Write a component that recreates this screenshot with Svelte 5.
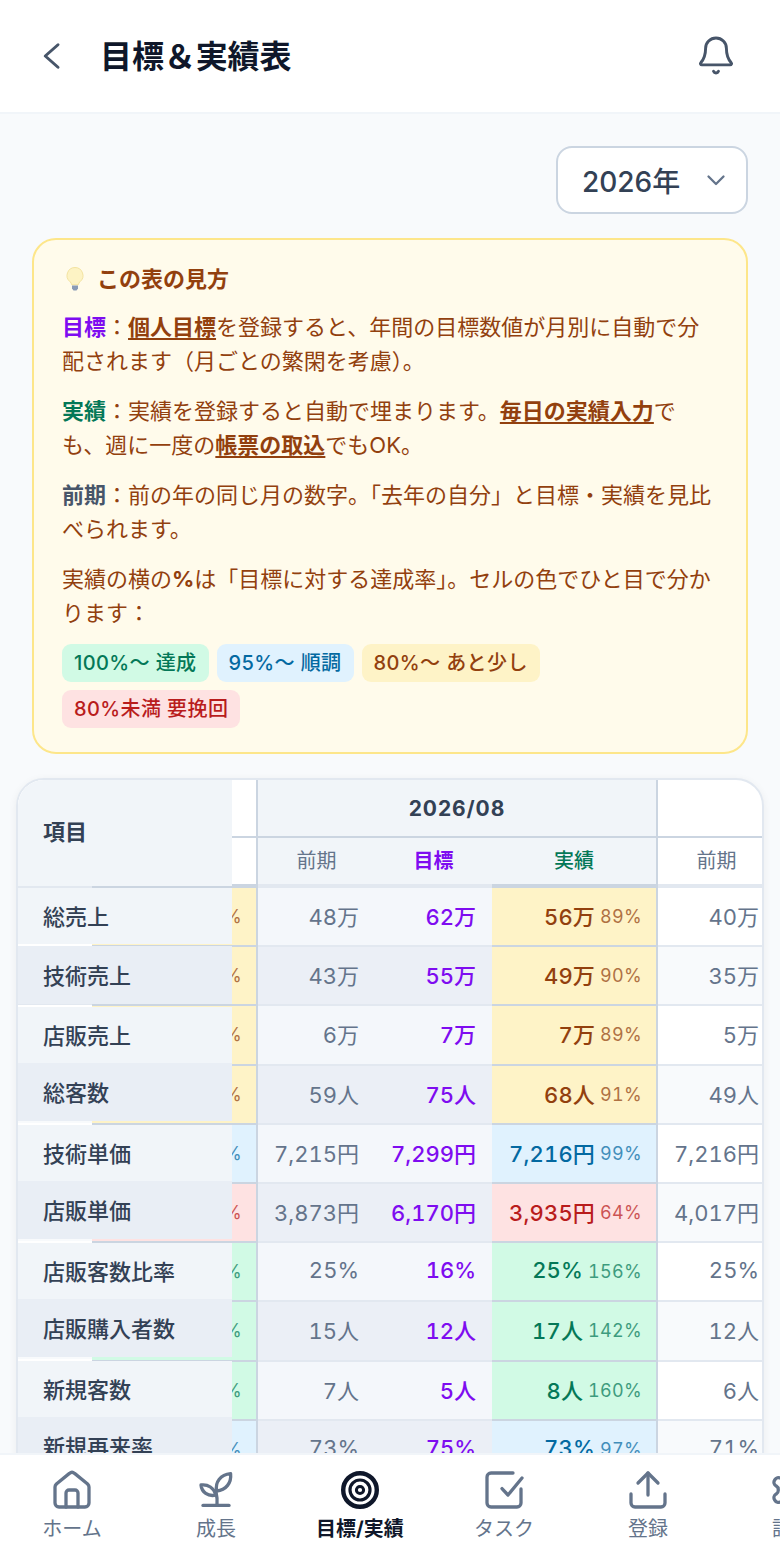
<script>
  const rows = [
    { label: '総売上', prev: '48万', goal: '62万', act: '56万', pct: '89%', tone: 'y', gap: 2 },
    { label: '技術売上', prev: '43万', goal: '55万', act: '49万', pct: '90%', tone: 'y', gap: 3, strip: true },
    { label: '店販売上', prev: '6万', goal: '7万', act: '7万', pct: '89%', tone: 'y', gap: 0, strip: true },
    { label: '総客数', prev: '59人', goal: '75人', act: '68人', pct: '91%', tone: 'y', gap: 4 },
    { label: '技術単価', prev: '7,215円', goal: '7,299円', act: '7,216円', pct: '99%', tone: 'b', gap: 0, strip: true },
    { label: '店販単価', prev: '3,873円', goal: '6,170円', act: '3,935円', pct: '64%', tone: 'r', gap: 4 },
    { label: '店販客数比率', prev: '25%', goal: '16%', act: '25%', pct: '156%', tone: 'g', gap: 0, strip: true },
    { label: '店販購入者数', prev: '15人', goal: '12人', act: '17人', pct: '142%', tone: 'g', gap: 4 },
    { label: '新規客数', prev: '7人', goal: '5人', act: '8人', pct: '160%', tone: 'g', gap: 0, strip: true },
    { label: '新規再来率', prev: '73%', goal: '75%', act: '73%', pct: '97%', tone: 'b', gap: 0 }
  ];
  const nextPrev = ['40万', '35万', '5万', '49人', '7,216円', '4,017円', '25%', '12人', '6人', '71%'];
</script>

<div class="page">
  <header class="top">
    <button class="icon-btn back" aria-label="戻る">
      <svg width="36" height="36" viewBox="0 0 24 24" fill="none" stroke="#475569" stroke-width="2" stroke-linecap="round" stroke-linejoin="round"><path d="M16 4.500 7.500 12l8.500 7.500"/></svg>
    </button>
    <h1>目標＆実績表</h1>
    <button class="icon-btn bell" aria-label="通知">
      <svg width="50" height="50" viewBox="0 0 24 24" fill="none" stroke="#475569" stroke-width="1.400" stroke-linecap="round" stroke-linejoin="round"><path d="M7 9.300a5 5 0 0 1 10 0c0 3.800 1.200 5.600 2.300 6.900.4.400.1 1-.5 1H5.200c-.6 0-.9-.6-.5-1C5.800 14.900 7 13.100 7 9.300Z"/><path d="M10.800 20.300a1.300 1.300 0 0 0 2.400 0"/></svg>
    </button>
  </header>

  <main>
    <div class="select-row">
      <div class="select">
        <span>2026年</span>
        <svg width="24" height="24" viewBox="0 0 24 24" fill="none" stroke="#64748b" stroke-width="2.300" stroke-linecap="round" stroke-linejoin="round"><path d="m4.500 8.500 7.500 7.500 7.500-7.500"/></svg>
      </div>
    </div>

    <section class="info">
      <h2>
        <svg class="bulb" width="20" height="26" viewBox="0 0 20 26"><path d="M10 1.500a8 8 0 0 0-5 14.200c1 .9 1.500 1.900 1.600 3h6.800c.1-1.100.6-2.100 1.600-3A8 8 0 0 0 10 1.500Z" fill="#fdf3c4" stroke="#f3e3a0" stroke-width="1"/><path d="M7 19.500h6v3l-1.500 2h-3l-1.500-2Z" fill="#8a9bb5"/></svg>
        この表の見方
      </h2>
      <p><b class="goal">目標</b>：<a>個人目標</a>を登録すると、年間の目標数値が月別に自動で分配されます（月ごとの繁閑を考慮）。</p>
      <p><b class="act">実績</b>：実績を登録すると自動で埋まります。<a>毎日の実績入力</a>でも、週に一度の<a>帳票の取込</a>でもOK。</p>
      <p><b class="prev">前期</b>：前の年の同じ月の数字。「去年の自分」と目標・実績を見比べられます。</p>
      <p>実績の横の<b>%</b>は「目標に対する達成率」。セルの色でひと目で分かります：</p>
      <div class="pills">
        <span class="pill g">100%〜 達成</span>
        <span class="pill b">95%〜 順調</span>
        <span class="pill y">80%〜 あと少し</span>
        <span class="pill r">80%未満 要挽回</span>
      </div>
    </section>

    <section class="card">
      <div class="thead">
        <div class="h-top">
          <div class="spacer"></div>
          <div class="h-month">2026/08</div>
          <div class="h-next"></div>
        </div>
        <div class="h-sub">
          <div class="spacer"></div>
          <div class="s-cell">前期</div>
          <div class="s-cell goal">目標</div>
          <div class="s-cell act wide">実績</div>
          <div class="s-cell blank">前期</div>
        </div>
      </div>

      <div class="tbody">
        {#each rows as r, i}
          <div class="row" class:alt={i % 2 === 1}>
            <div class="c lead"></div>
            <div class="c jitsu {r.tone}"><small>{r.pct}</small></div>
            <div class="c num prevv shade">{r.prev}</div>
            <div class="c num goalv shade">{r.goal}</div>
            <div class="c jitsu {r.tone}"><strong>{r.act}</strong><small>{r.pct}</small></div>
            <div class="c num prevv">{nextPrev[i]}</div>
          </div>
        {/each}
      </div>

      <div class="sticky">
        <div class="sticky-head">項目</div>
        {#each rows as r, i}
          <div class="lab" class:even={i % 2 === 1} class:strip={r.strip} style="margin-bottom:{r.gap}px">{r.label}</div>
        {/each}
      </div>
    </section>
  </main>

  <nav>
    <div class="tab">
      <svg viewBox="0 0 24 24" fill="none" stroke="#64748b" stroke-width="1.650" stroke-linecap="round" stroke-linejoin="round"><path d="M3.500 10.500c0-.6.300-1.100.7-1.500l6.500-5.300a2 2 0 0 1 2.600 0L19.800 9c.4.400.7.900.7 1.500v8a2 2 0 0 1-2 2h-13a2 2 0 0 1-2-2Z"/><path d="M9 20.500v-7a1.500 1.500 0 0 1 1.500-1.500h3a1.500 1.500 0 0 1 1.500 1.500v7"/></svg>
      <span>ホーム</span>
    </div>
    <div class="tab">
      <svg viewBox="0 0 24 24" fill="none" stroke="#64748b" stroke-width="1.650" stroke-linecap="round" stroke-linejoin="round"><path d="M5.500 19.700h13"/><path d="M12.500 19.700c.2-2.500 0-4.700-.5-6.700"/><path d="M12 14.500C11 11 8 9 4.500 9.500c.3 3.500 3.500 6 7.500 5Z"/><path d="M12.300 12.500c-.8-4.500 2-8.200 7-8.700.5 4.500-2.200 8.300-7 8.700Z"/></svg>
      <span>成長</span>
    </div>
    <div class="tab active">
      <svg viewBox="0 0 48 48" fill="none" stroke="#0f172a"><circle cx="24" cy="24" r="16.800" stroke-width="4.400"/><circle cx="24" cy="24" r="10" stroke-width="3.200"/><circle cx="24" cy="24" r="3.600" stroke-width="3"/></svg>
      <span>目標/実績</span>
    </div>
    <div class="tab">
      <svg viewBox="0 0 24 24" fill="none" stroke="#64748b" stroke-width="1.650" stroke-linecap="round" stroke-linejoin="round"><path d="M20.500 11.500v7a2 2 0 0 1-2 2h-13a2 2 0 0 1-2-2v-13a2 2 0 0 1 2-2h11"/><path d="m11 11.300 3 3.200 7-8.500"/></svg>
      <span>タスク</span>
    </div>
    <div class="tab">
      <svg viewBox="0 0 24 24" fill="none" stroke="#64748b" stroke-width="1.650" stroke-linecap="round" stroke-linejoin="round"><path d="M3.500 14v4.500a2 2 0 0 0 2 2h13a2 2 0 0 0 2-2V14"/><path d="M12 14.500V3.500"/><path d="m7 8.500 5-5 5 5"/></svg>
      <span>登録</span>
    </div>
    <div class="tab">
      <svg viewBox="0 0 24 24" fill="none" stroke="#64748b" stroke-width="1.650" stroke-linecap="round" stroke-linejoin="round"><path d="M12.220 2h-.44a2 2 0 0 0-2 2v.18a2 2 0 0 1-1 1.730l-.43.250a2 2 0 0 1-2 0l-.15-.080a2 2 0 0 0-2.730.730l-.220.380a2 2 0 0 0 .730 2.730l.150.100a2 2 0 0 1 1 1.720v.510a2 2 0 0 1-1 1.740l-.150.090a2 2 0 0 0-.730 2.730l.220.380a2 2 0 0 0 2.730.730l.150-.080a2 2 0 0 1 2 0l.430.250a2 2 0 0 1 1 1.730V20a2 2 0 0 0 2 2h.440a2 2 0 0 0 2-2v-.18a2 2 0 0 1 1-1.730l.430-.250a2 2 0 0 1 2 0l.150.080a2 2 0 0 0 2.730-.730l.220-.390a2 2 0 0 0-.730-2.730l-.150-.080a2 2 0 0 1-1-1.740v-.5a2 2 0 0 1 1-1.740l.150-.090a2 2 0 0 0 .730-2.730l-.220-.380a2 2 0 0 0-2.730-.730l-.150.080a2 2 0 0 1-2 0l-.430-.250a2 2 0 0 1-1-1.730V4a2 2 0 0 0-2-2z"/><circle cx="12" cy="12" r="3"/></svg>
      <span>設定</span>
    </div>
  </nav>
</div>

<style>
  :global(body) { margin: 0; background: #f8fafc; }
  * { box-sizing: border-box; }
  .page {
    width: 780px; height: 1560px; overflow: hidden;
    background: #f8fafc; color: #334155;
    font-family: Inter, "Noto Sans CJK JP", sans-serif;
  }
  .top {
    height: 114px; background: #fff; border-bottom: 2px solid #f1f5f9;
    display: flex; align-items: center; padding: 0 39px 0 34px;
  }
  .icon-btn { background: none; border: 0; padding: 0; display: flex; }
  .bell { margin-bottom: 4px; }
  .top h1 { margin: 2px 0 0 30px; flex: 1; font-size: 32px; font-weight: 700; color: #0f172a; letter-spacing: -0.1px; line-height: 1; }

  main { padding: 32px 16px 0; }
  .select-row { display: flex; justify-content: flex-end; padding-right: 16px; }
  .select {
    width: 192px; height: 68px; border: 2px solid #cbd5e1; border-radius: 16px; background: #fff;
    display: flex; align-items: center; justify-content: space-between; padding: 0 18px 0 24px;
    font-size: 28px; font-weight: 500; color: #334155;
  }

  .info {
    margin: 24px 16px 24px; height: 516px; background: #fffbeb; border: 2px solid #fde68a; border-radius: 24px;
    padding: 22px 28px; color: #92400e; font-size: 22px; line-height: 34px;
  }
  .info h2 { margin: 0 0 14px; display: flex; align-items: center; gap: 12px; font-size: 22px; font-weight: 700; line-height: 34px; }
  .bulb { margin-left: 3px; }
  .info p { margin: 0 0 16px; }
  .info p:last-of-type { margin-bottom: 14px; }
  .info a { font-weight: 700; text-decoration: underline; text-underline-offset: 3px; text-decoration-thickness: 2px; }
  .info .goal { color: #7e0cf0; }
  .info .act { color: #047857; }
  .info .prev { color: #475569; }
  .pills { display: flex; flex-wrap: wrap; gap: 8px; }
  .pill { height: 38px; padding: 0 12px; border-radius: 9px; font-size: 20px; font-weight: 500; line-height: 38px; letter-spacing: .4px; white-space: nowrap; }
  .pill.g { background: #d1fae5; color: #047857; }
  .pill.b { background: #e0f2fe; color: #0369a1; }
  .pill.y { background: #fef3c7; color: #92400e; }
  .pill.r { background: #fee2e2; color: #b91c1c; }

  .card {
    position: relative; width: 748px; height: 800px; background: #fff;
    border: 2px solid #e2e8f0; border-radius: 28px; overflow: hidden;
    box-shadow: 0 2px 8px rgba(15, 23, 42, .06);
  }
  .thead, .row, .h-top, .h-sub { display: flex; }
  .thead { flex-direction: column; height: 108px; border-bottom: 4px solid #e2e8f0; }
  .spacer { position: relative; width: 240px; flex: none; background: #fff; border-right: 2px solid #cbd5e1; }
  .h-top { height: 58px; }
  .h-top .spacer, .h-month, .h-next { border-bottom: 2px solid #cbd5e1; }
  .h-month { width: 400px; flex: none; background: #f1f5f9; border-right: 2px solid #cbd5e1; display: flex; align-items: center; justify-content: center; font-size: 21px; font-weight: 700; letter-spacing: .9px; color: #334155; }
  .h-next { flex: 1; }
  .h-sub { height: 46px; }
  .h-sub .spacer::after { content: ""; position: absolute; left: 74px; right: -2px; top: 100%; height: 4px; background: #cbd5e1; }
  .s-cell { position: relative; width: 117px; flex: none; background: #f1f5f9; display: flex; align-items: center; justify-content: center; padding-bottom: 4px; font-size: 20px; color: #64748b; }
  .s-cell.goal { color: #7e0cf0; font-weight: 700; }
  .s-cell.act { color: #047857; font-weight: 500; }
  .s-cell.wide { width: 166px; border-right: 2px solid #cbd5e1; }
  .s-cell.wide::after { content: ""; position: absolute; left: 0; right: -2px; top: 100%; height: 4px; background: #cbd5e1; }
  .s-cell.blank { background: #fff; }

  .row { height: 59.2px; background: #fff; border-bottom: 2px solid #e2e8f0; }
  .row.alt { background: #f8fafc; }
  .row .shade { background: #f4f7fb; }
  .row.alt .shade { background: #ebeff6; }
  .c { flex: none; display: flex; align-items: center; justify-content: flex-end; padding-bottom: 3px; font-variant-numeric: tabular-nums; }
  .lead { width: 74px; }
  .num { width: 117px; padding-right: 16px; font-size: 22px; }
  .prevv { color: #64748b; }
  .goalv { color: #7e0cf0; font-weight: 500; }
  .jitsu { width: 166px; padding-right: 14px; border-right: 2px solid #cbd5e1; box-shadow: 0 2px 0 #cbd5e1; gap: 5px; }
  .jitsu strong { font-size: 22px; font-weight: 500; letter-spacing: .2px; }
  .jitsu small { font-size: 18px; letter-spacing: .3px; opacity: .72; padding-top: 3px; }
  .jitsu.y { background: #fef3c7; color: #92400e; }
  .jitsu.b { background: #e0f2fe; color: #0369a1; }
  .jitsu.r { background: #fee2e2; color: #b91c1c; }
  .jitsu.g { background: #d1fae5; color: #047857; }

  .sticky { position: absolute; left: 0; top: 0; width: 214px; }
  .sticky-head { height: 106px; background: #f1f5f9; display: flex; align-items: center; padding: 0 0 6px 25px; font-size: 22px; font-weight: 700; color: #334155; margin-bottom: 2px; }
  .lab { position: relative; height: 56px; background: #f1f5f9; display: flex; align-items: center; padding: 0 0 3px 25px; font-size: 22px; font-weight: 500; color: #334155; }
  .lab.even { height: 58px; background: #e9eef5; }
  .lab.strip::after { content: ""; position: absolute; left: 0; width: 74px; bottom: 100%; height: 2px; background: #fff; }

  nav {
    position: fixed; left: 0; right: 0; bottom: 0; height: 107px; background: #fff; border-top: 2px solid #f1f5f9;
    display: flex; overflow: hidden;
  }
  .tab { width: 144px; flex: none; display: flex; flex-direction: column; align-items: center; padding-top: 11px; font-size: 20px; color: #64748b; }
  .tab svg { width: 48px; height: 48px; flex: none; }
  .tab span { line-height: 28px; margin-top: 1px; white-space: nowrap; }
  .tab.active { color: #0f172a; font-weight: 700; }
</style>
